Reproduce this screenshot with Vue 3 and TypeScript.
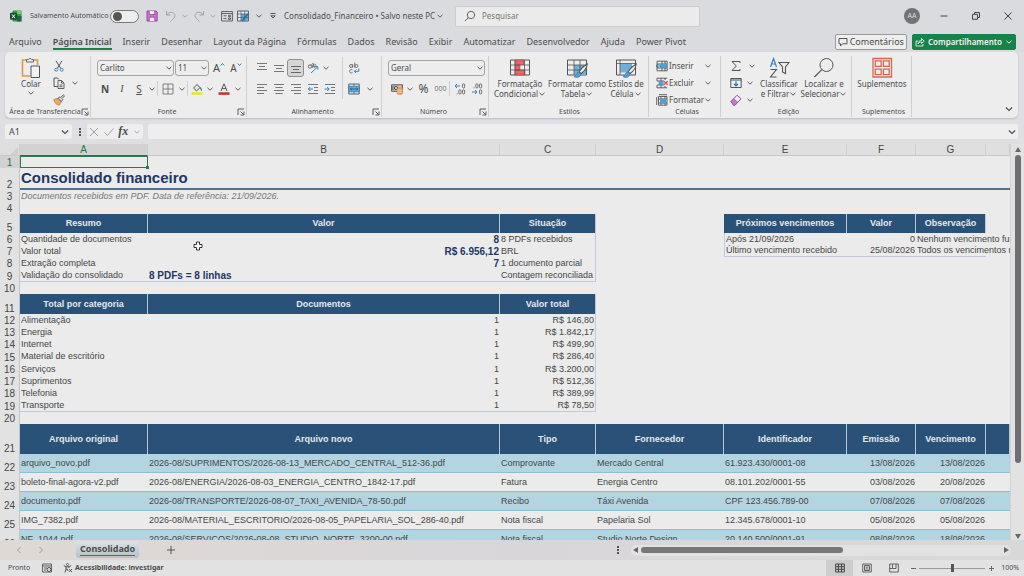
<script setup lang="ts">
import { ref } from 'vue'

interface Cell { t?: string; c?: string }
interface Row { n: number; h: string; c?: string; cells: Cell[] }

const tabs = ['Arquivo', 'Página Inicial', 'Inserir', 'Desenhar', 'Layout da Página', 'Fórmulas', 'Dados', 'Revisão', 'Exibir', 'Automatizar', 'Desenvolvedor', 'Ajuda', 'Power Pivot']
const activeTab = ref('Página Inicial')
const autosave = ref(false)
const nameBox = ref('A1')
const formula = ref('')
const query = ref('')
const zoom = ref(50)
const columns = ['A', 'B', 'C', 'D', 'E', 'F', 'G', '']

const blank = (k: number): Cell[] => Array.from({ length: k }, () => ({}))
const heads = (...t: string[]): Cell[] => t.map(x => ({ t: x, c: 'head' }))

function summary(n: number, a: string, b: string, c: string, left = false): Row {
  const last = n === 9 ? ' base' : ''
  const due: Record<number, Cell[]> = {
    6: [{ t: 'Após 21/09/2026', c: 'start' }, { t: '0', c: 'num' }, { t: 'Nenhum vencimento futuro' }, {}],
    7: [{ t: 'Último vencimento recebido', c: 'start base' }, { t: '25/08/2026', c: 'num base' }, { t: 'Todos os vencimentos recebidos', c: 'base' }, {}],
  }
  return {
    n, h: n === 9 ? 'h13' : 'h12',
    cells: [{ t: a, c: last }, { t: b, c: (left ? 'strong' : 'strong num') + last }, { t: c, c: 'end' + last }, {}, ...(due[n] ?? blank(4))],
  }
}

const categories: [string, string][] = [
  ['Alimentação', '146,80'], ['Energia', '1.842,17'], ['Internet', '499,90'], ['Material de escritório', '286,40'],
  ['Serviços', '3.200,00'], ['Suprimentos', '512,36'], ['Telefonia', '389,99'], ['Transporte', '78,50'],
]

const files: string[][] = [
  ['arquivo_novo.pdf', '2026-08/SUPRIMENTOS/2026-08-13_MERCADO_CENTRAL_512-36.pdf', 'Comprovante', 'Mercado Central', '61.923.430/0001-08', '13/08/2026', '13/08/2026'],
  ['boleto-final-agora-v2.pdf', '2026-08/ENERGIA/2026-08-03_ENERGIA_CENTRO_1842-17.pdf', 'Fatura', 'Energia Centro', '08.101.202/0001-55', '03/08/2026', '20/08/2026'],
  ['documento.pdf', '2026-08/TRANSPORTE/2026-08-07_TAXI_AVENIDA_78-50.pdf', 'Recibo', 'Táxi Avenida', 'CPF 123.456.789-00', '07/08/2026', '07/08/2026'],
  ['IMG_7382.pdf', '2026-08/MATERIAL_ESCRITORIO/2026-08-05_PAPELARIA_SOL_286-40.pdf', 'Nota fiscal', 'Papelaria Sol', '12.345.678/0001-10', '05/08/2026', '05/08/2026'],
  ['NF_1044.pdf', '2026-08/SERVICOS/2026-08-08_STUDIO_NORTE_3200-00.pdf', 'Nota fiscal', 'Studio Norte Design', '20.140.500/0001-91', '08/08/2026', '18/08/2026'],
]

const rows: Row[] = [
  { n: 1, h: 'h12', cells: [{ c: 'selected' }, ...blank(7)] },
  { n: 2, h: 'h22', c: 'title-row', cells: [{ t: 'Consolidado financeiro', c: 'title' }, ...blank(7)] },
  { n: 3, h: 'h12', cells: [{ t: 'Documentos recebidos em PDF. Data de referência: 21/09/2026.', c: 'note' }, ...blank(7)] },
  { n: 4, h: 'h12', cells: blank(8) },
  { n: 5, h: 'h19', cells: [...heads('Resumo', 'Valor', 'Situação'), {}, ...heads('Próximos vencimentos', 'Valor', 'Observação'), {}] },
  summary(6, 'Quantidade de documentos', '8', '8 PDFs recebidos'),
  summary(7, 'Valor total', 'R$ 6.956,12', 'BRL'),
  summary(8, 'Extração completa', '7', '1 documento parcial'),
  summary(9, 'Validação do consolidado', '8 PDFs = 8 linhas', 'Contagem reconciliada', true),
  { n: 10, h: 'h12', cells: blank(8) },
  { n: 11, h: 'h20', cells: [...heads('Total por categoria', 'Documentos', 'Valor total'), ...blank(5)] },
  ...categories.map(([name, value], i): Row => {
    const last = i === 7 ? ' base' : ''
    return {
      n: 12 + i, h: i % 4 === 3 ? 'h13' : 'h12',
      cells: [{ t: name, c: last }, { t: '1', c: 'num' + last }, { t: 'R$ ' + value, c: 'num end' + last }, ...blank(5)],
    }
  }),
  { n: 20, h: 'h12', cells: blank(8) },
  { n: 21, h: 'h30', cells: heads('Arquivo original', 'Arquivo novo', 'Tipo', 'Fornecedor', 'Identificador', 'Emissão', 'Vencimento', '') },
  ...files.map((f, i): Row => ({
    n: 22 + i, h: 'h19', c: i % 2 ? 'file' : 'file band',
    cells: [...f.map((t, k) => ({ t, c: k > 4 ? 'num' : '' })), {}],
  })),
]
</script>

<template>
  <div class="app">
    <svg class="sprite" aria-hidden="true">
      <symbol id="chev" viewBox="0 0 8 8"><path d="M1.500 2.800 4 5.200 6.500 2.800" fill="none" stroke="currentColor" stroke-width=".9" /></symbol>
      <symbol id="launch" viewBox="0 0 8 8"><path d="M1 7V1h6M3.500 3.500l3 3M7 3.500V7H3.500" fill="none" stroke="currentColor" stroke-width=".9" /></symbol>
      <symbol id="brush" viewBox="0 0 12 12"><path d="M11 .8C8.500 2.200 6 4.500 4.800 6.800l1.500 1.300C8.500 6.500 10.600 3.500 11 .8z" fill="#eee" stroke="#555" stroke-width=".8" /><path d="M4.500 7C2.600 7 3 9.500.8 10.500c2 1 4.800.8 5.200-2z" fill="#5b9fce" stroke="#3579a8" stroke-width=".6" /></symbol>
    </svg>

    <header class="titlebar">
      <div class="quick">
        <svg class="logo" viewBox="0 0 12 12"><rect x="2.500" y=".5" width="9" height="11" rx="1" fill="#2c9a55" /><path d="M7 .5h3.500a1 1 0 0 1 1 1V4H7z" fill="#7ccb5c" /><path d="M7 6h4.500v5.500H7z" fill="#1d6b3c" /><rect y="2.800" width="7" height="7" rx="1" fill="#164f2c" /><path d="m2 4.400 3 3.800M5 4.400 2 8.200" stroke="#fff" /></svg>
        <label class="autosave" for="autosave">Salvamento Automático</label>
        <input id="autosave" v-model="autosave" class="toggle" type="checkbox" role="switch" />
        <button class="w26" aria-label="Salvar"><svg class="i12" viewBox="0 0 12 12"><path d="M1 1h9l1.200 1.200V11H1z" fill="#c77acb" stroke="#9c45a3" /><path d="M3.200 1v3.500h5.600V1M3.200 11V7.200h5.600V11" fill="#eee" stroke="#9c45a3" stroke-width=".9" /></svg></button>
        <button class="w12 dim" aria-label="Desfazer"><svg class="i12" viewBox="0 0 12 12"><path d="M1.500 1v4h4M1.800 4.800C4 1.600 8.500 1.300 9.700 4.500c.9 2.600-1.400 4.300-4.200 7" fill="none" stroke="currentColor" /></svg></button>
        <button class="w16 dim" aria-label="Opções de desfazer"><svg class="i8"><use href="#chev" /></svg></button>
        <button class="w12 dim" aria-label="Refazer"><svg class="i12" viewBox="0 0 12 12"><path d="M10.500 1v4h-4M10.200 4.800C8 1.600 3.500 1.300 2.300 4.500c-.9 2.600 1.400 4.300 4.200 7" fill="none" stroke="currentColor" /></svg></button>
        <button class="w16 dim" aria-label="Opções de refazer"><svg class="i8"><use href="#chev" /></svg></button>
        <button class="w12" aria-label="Formulário"><svg class="i12" viewBox="0 0 12 12"><path d="M.6 1.500h10.800v9.500H.6zM.6 3.500h10.800M2.500 5.800h3M2.500 8.500h3M7.500 5.300h2v1.400h-2zM7.500 8h2v1.400h-2z" fill="none" stroke="#555" stroke-width=".9" /></svg></button>
        <button class="w20" aria-label="Tabela"><svg class="i12" viewBox="0 0 12 12"><path d="M.6 1h10.800v10H.6z" fill="#e8eef3" stroke="#4a5a68" /><path d="M4 4h7v7H4z" fill="#69a9d4" /><path d="M.6 4h10.800M.6 7.500h10.800M4 1v10M7.700 1v10" stroke="#4a5a68" stroke-width=".7" /><path d="m5 11 6-7" stroke="#1e6ea8" stroke-width="1.500" /></svg></button>
        <button class="w12" aria-label="Opções de tabela"><svg class="i8"><use href="#chev" /></svg></button>
        <button class="w16" aria-label="Personalizar"><svg class="i8" viewBox="0 0 8 8"><path d="M1.500 1.500h5M1.800 3.800 4 6l2.200-2.200z" fill="none" stroke="#444" stroke-width=".9" /></svg></button>
      </div>
      <button class="doc">Consolidado_Financeiro • Salvo neste PC <svg class="i8"><use href="#chev" /></svg></button>
      <label class="search">
        <svg class="i12" viewBox="0 0 12 12"><path d="M.8 11.200 4.500 7.500" stroke="#666" /><circle cx="7" cy="5" r="3.700" fill="none" stroke="#666" /></svg>
        <input v-model="query" type="text" placeholder="Pesquisar" aria-label="Pesquisar" />
      </label>
      <div class="window">
        <button class="avatar" aria-label="Conta AA">AA</button>
        <button class="w32" aria-label="Minimizar"><svg class="i10" viewBox="0 0 10 10"><path d="M1.500 5h7" stroke="#444" /></svg></button>
        <button class="w32" aria-label="Restaurar"><svg class="i10" viewBox="0 0 10 10"><path d="M1.500 3.300h5v5h-5zM3.500 3V1.500h5v5H7" fill="none" stroke="#444" stroke-linejoin="round" /></svg></button>
        <button class="w32" aria-label="Fechar"><svg class="i10" viewBox="0 0 10 10"><path d="m1.500 1.500 7 7M8.500 1.500l-7 7" stroke="#444" /></svg></button>
      </div>
    </header>

    <nav class="tabs" aria-label="Faixa de opções">
      <button v-for="t in tabs" :key="t" :class="['tab', { on: t === activeTab }]" @click="activeTab = t">{{ t }}</button>
      <div class="actions">
        <button class="comments"><svg class="i10" viewBox="0 0 10 10"><path d="M1 1.500h8v5.300H4.500L2.500 9V6.800H1z" fill="none" stroke="#444" stroke-width=".9" /></svg>Comentários</button>
        <button class="share"><svg class="i10" viewBox="0 0 10 10"><path d="M3 4H1v5h7V7M3 7c.2-2.500 1.500-3.500 3.500-3.500V1.500L9.300 4.200 6.500 6.500V5C5 5 4 5.500 3 7z" fill="none" stroke="#fff" stroke-width=".8" /></svg>Compartilhamento<svg class="i8"><use href="#chev" /></svg></button>
      </div>
    </nav>

    <section class="ribbon">
      <div class="group g-clip">
        <div class="body">
          <button class="big w44">
            <svg class="i22" viewBox="0 0 22 22"><path d="M7 3H2.500v16H10M13 3h4.500v5" fill="none" stroke="#e09a3c" stroke-width="1.600" /><path d="M6.500 5V2.500H8.500a1.600 1.600 0 0 1 3 0h2V5z" fill="#eee" stroke="#666" /><path d="M11 9h8.500v11.500H11z" fill="#f2f2f2" stroke="#555" /></svg>
            <span>Colar</span><svg class="i8"><use href="#chev" /></svg>
          </button>
          <div class="stack">
            <div class="line"><button class="w12" aria-label="Recortar"><svg class="i12" viewBox="0 0 12 12"><path d="M3 .8 7.800 8.500M9 .8 4.200 8.500" stroke="#555" /><circle cx="3.300" cy="9.700" r="1.500" fill="none" stroke="#3a87bd" /><circle cx="8.700" cy="9.700" r="1.500" fill="none" stroke="#3a87bd" /></svg></button></div>
            <div class="line"><button class="w12" aria-label="Copiar"><svg class="i12" viewBox="0 0 12 12"><path d="M5 9.500H1V1h3.500L6 2.500" fill="none" stroke="#555" /><path d="M5 3.500h3.500L11 6v5.500H5zM8.500 3.500V6H11M6.500 8h3M6.500 9.700h3" fill="none" stroke="#555" stroke-width=".9" /></svg></button><button class="w20" aria-label="Opções de copiar"><svg class="i8"><use href="#chev" /></svg></button></div>
            <div class="line"><button class="w12" aria-label="Pincel de formatação"><svg class="i12" viewBox="0 0 12 12"><path d="M.8 5.500 5 4.300l3.300 3.300L6.500 11C4 11.300 1.600 9 .8 5.500z" fill="#eea860" stroke="#c9792f" stroke-width=".8" /><path d="m5 4.300 2-1.500.8.700L10.300.8l1.200 1.100L9 4.700l.8.900-1.500 2z" fill="#ddd" stroke="#555" stroke-width=".9" /></svg></button></div>
          </div>
        </div>
        <div class="caption"><span>Área de Transferência</span><button aria-label="Mais opções de transferência"><svg class="i8"><use href="#launch" /></svg></button></div>
      </div>

      <div class="group g-font">
        <div class="body col">
          <div class="line tall">
            <span class="pick w77"><select aria-label="Fonte"><option>Carlito</option></select><svg class="i8"><use href="#chev" /></svg></span>
            <span class="pick w34"><select aria-label="Tamanho da fonte"><option>11</option></select><svg class="i8"><use href="#chev" /></svg></span>
            <button class="w18 glyph" aria-label="Aumentar fonte"><span>A</span><svg class="i5" viewBox="0 0 5 5"><path d="M.7 3.500 2.500 1.500l1.800 2" fill="none" stroke="#2f7fb5" /></svg></button>
            <button class="w16 glyph small" aria-label="Diminuir fonte"><span>A</span><svg class="i5" viewBox="0 0 5 5"><path d="M.7 1.500 2.500 3.500l1.800-2" fill="none" stroke="#2f7fb5" /></svg></button>
          </div>
          <div class="line tall">
            <button class="w16 fmt" aria-label="Negrito"><b>N</b></button>
            <button class="w18 fmt serif" aria-label="Itálico"><i>I</i></button>
            <button class="w16 fmt" aria-label="Sublinhado"><u>S</u></button>
            <button class="w10" aria-label="Opções de sublinhado"><svg class="i8"><use href="#chev" /></svg></button>
            <i class="sep"></i>
            <button class="w18" aria-label="Bordas"><svg class="i12" viewBox="0 0 12 12"><path d="M1 1h10v10H1zM6 1v10M1 6h10" fill="none" stroke="#777" stroke-width=".9" /></svg></button>
            <button class="w10" aria-label="Opções de bordas"><svg class="i8"><use href="#chev" /></svg></button>
            <i class="sep"></i>
            <button class="w16" aria-label="Cor de preenchimento"><svg class="i12" viewBox="0 0 12 12"><path d="M2.500 5 6 1.500 9 4.600 5.500 8z" fill="#e6e6e6" stroke="#555" /><path d="M9.300 4.500c1 1.200 1.300 2.300 1 3.200" fill="none" stroke="#2f7fb5" stroke-width="1.200" /><path d="M.5 9.300h11v2.500H.5z" fill="#e6e81e" /></svg></button>
            <button class="w10" aria-label="Opções de preenchimento"><svg class="i8"><use href="#chev" /></svg></button>
            <button class="w18" aria-label="Cor da fonte"><svg class="i12" viewBox="0 0 12 12"><path d="M3 8 6 .8 9 8M4 5.600h4" fill="none" stroke="#555" /><path d="M.5 9.300h11v2.500H.5z" fill="#d3272b" /></svg></button>
            <button class="w10" aria-label="Opções de cor da fonte"><svg class="i8"><use href="#chev" /></svg></button>
          </div>
        </div>
        <div class="caption"><span>Fonte</span><button aria-label="Mais opções de fonte"><svg class="i8"><use href="#launch" /></svg></button></div>
      </div>

      <div class="group g-align">
        <div class="body">
          <div class="col">
            <div class="line tall">
              <button class="w17" aria-label="Alinhar em cima"><svg class="i12" viewBox="0 0 12 12"><path d="M1 1.500h10M3 4.500h6M1 7.500h10" stroke="#777" /></svg></button>
              <button class="w17" aria-label="Alinhar no meio"><svg class="i12" viewBox="0 0 12 12"><path d="M1 3.500h10M3 6.500h6M1 9.500h10" stroke="#777" /></svg></button>
              <button class="w17 active" aria-label="Alinhar embaixo" aria-pressed="true"><svg class="i12" viewBox="0 0 12 12"><path d="M1 4.500h10M3 7.500h6M1 10.500h10" stroke="#666" /></svg></button>
              <button class="w17" aria-label="Orientação"><svg class="i12" viewBox="0 0 12 12"><circle cx="3" cy="4.500" r="1.700" fill="none" stroke="#666" /><path d="M4.500 2.500 6 6M5.500 1l2.300 4.500" stroke="#666" /><circle cx="7.400" cy="3.500" r="1.400" fill="none" stroke="#666" stroke-width=".8" /><path d="m4 11 6.500-6M7.800 4.700h3v3" fill="none" stroke="#2f86c0" /></svg></button>
              <button class="w10" aria-label="Opções de orientação"><svg class="i8"><use href="#chev" /></svg></button>
            </div>
            <div class="line tall">
              <button class="w17" aria-label="Alinhar à esquerda"><svg class="i12" viewBox="0 0 12 12"><path d="M1 1.500h10M1 4.500h7M1 7.500h10M1 10.500h7" stroke="#777" /></svg></button>
              <button class="w17" aria-label="Centralizar"><svg class="i12" viewBox="0 0 12 12"><path d="M1 1.500h10M2.500 4.500h7M1 7.500h10M2.500 10.500h7" stroke="#777" /></svg></button>
              <button class="w17" aria-label="Alinhar à direita"><svg class="i12" viewBox="0 0 12 12"><path d="M1 1.500h10M4 4.500h7M1 7.500h10M4 10.500h7" stroke="#777" /></svg></button>
              <button class="w17" aria-label="Diminuir recuo"><svg class="i12" viewBox="0 0 12 12"><path d="M1 1.500h10M7 4.500h4M7 7.500h4M1 10.500h10" stroke="#777" /><path d="M6 6H1.300m2-2-2 2 2 2" fill="none" stroke="#2f86c0" /></svg></button>
              <button class="w17" aria-label="Aumentar recuo"><svg class="i12" viewBox="0 0 12 12"><path d="M1 1.500h10M7 4.500h4M7 7.500h4M1 10.500h10" stroke="#777" /><path d="M.5 6h4.700m-2-2 2 2-2 2" fill="none" stroke="#2f86c0" /></svg></button>
            </div>
          </div>
          <i class="sep long"></i>
          <div class="col">
            <div class="line tall"><button class="w22" aria-label="Quebrar texto"><svg class="i12" viewBox="0 0 12 12"><circle cx="3" cy="4" r="1.500" fill="none" stroke="#666" stroke-width=".9" /><path d="M4.700 2.200v3.500M6.800.5v5.200M4.600 8C2.500 7 1.500 8.300 1.500 9.300s1.200 2.200 3.100 1.400" fill="none" stroke="#666" stroke-width=".9" /><circle cx="8.400" cy="4" r="1.500" fill="none" stroke="#666" stroke-width=".9" /><path d="M10.800 6.500v2.800H6.500m1.700-1.800L6.400 9.300l1.800 1.800" fill="none" stroke="#2f86c0" /></svg></button></div>
            <div class="line tall"><button class="w22" aria-label="Mesclar"><svg class="i12" viewBox="0 0 12 12"><path d="M.8 1h10.400v10H.8z" fill="#d7e6f0" stroke="#4f6472" /><path d="M.8 3.300h10.400v5.400H.8z" fill="#6bb0dc" stroke="#3b6f92" stroke-width=".7" /><path d="M6 1v2.300M6 8.700V11" stroke="#4f6472" stroke-width=".8" /><path d="M2.300 6h7.400M3.800 4.500 2.300 6l1.500 1.500M8.200 4.500 9.700 6 8.200 7.500" fill="none" stroke="#175a86" stroke-width=".9" /></svg></button><button class="w10" aria-label="Opções de mesclar"><svg class="i8"><use href="#chev" /></svg></button></div>
          </div>
        </div>
        <div class="caption"><span>Alinhamento</span><button aria-label="Mais opções de alinhamento"><svg class="i8"><use href="#launch" /></svg></button></div>
      </div>

      <div class="group g-num">
        <div class="body col">
          <div class="line tall"><span class="pick full"><select aria-label="Formato de número"><option>Geral</option></select><svg class="i8"><use href="#chev" /></svg></span></div>
          <div class="line tall">
            <button class="w17" aria-label="Formato de moeda"><svg class="i12" viewBox="0 0 12 12"><path d="M.6 1.800h10.800v6.500H.6z" fill="#c9c9c9" stroke="#555" /><circle cx="5" cy="5" r="1.700" fill="none" stroke="#555" /><path d="M2 3v4" stroke="#555" /><rect x="6" y="4.800" width="5.500" height="6.500" rx="1.500" fill="#eca060" stroke="#cd7f3a" stroke-width=".7" /><path d="M6.200 7.200h5M6.200 9.200h5" stroke="#fff" stroke-width=".5" /></svg></button>
            <button class="w10" aria-label="Opções de moeda"><svg class="i8"><use href="#chev" /></svg></button>
            <button class="w17 pct" aria-label="Porcentagem">%</button>
            <button class="w17 zeros" aria-label="Milhares">000</button>
            <i class="sep"></i>
            <button class="w17" aria-label="Aumentar casas decimais"><svg class="i12" viewBox="0 0 12 12"><path d="M6 3H1m2-2L1 3l2 2" fill="none" stroke="#2f86c0" /><g fill="none" stroke="#666" stroke-width=".9"><rect x="8.500" y=".8" width="2.200" height="4.200" rx="1.100" /><rect x="4.800" y="6.800" width="2.200" height="4.200" rx="1.100" /><rect x="8.500" y="6.800" width="2.200" height="4.200" rx="1.100" /><path d="M3 10.300v1" /></g></svg></button>
            <button class="w17" aria-label="Diminuir casas decimais"><svg class="i12" viewBox="0 0 12 12"><path d="M1 9h5M4 7l2 2-2 2" fill="none" stroke="#2f86c0" /><g fill="none" stroke="#666" stroke-width=".9"><rect x="4.800" y=".8" width="2.200" height="4.200" rx="1.100" /><rect x="8.500" y=".8" width="2.200" height="4.200" rx="1.100" /><rect x="8.500" y="6.800" width="2.200" height="4.200" rx="1.100" /><path d="M3 4.300v1" /></g></svg></button>
          </div>
        </div>
        <div class="caption"><span>Número</span><button aria-label="Mais opções de número"><svg class="i8"><use href="#launch" /></svg></button></div>
      </div>

      <div class="group g-style">
        <div class="body">
          <button class="big w56"><svg class="i22" viewBox="0 0 22 22"><path d="M1.500 3h19v15h-19z" fill="#eee" stroke="#555" /><path d="M6 3h9v4.500H6zM6 8h5v5H6zM6 13h10v5H6z" fill="#e8636a" stroke="#c1373f" stroke-width=".6" /><path d="M1.500 8h19M1.500 13h19M6 3v15M15.500 3v15" stroke="#555" stroke-width=".8" /></svg><span>Formatação</span><span>Condicional <svg class="i8"><use href="#chev" /></svg></span></button>
          <button class="big w58"><svg class="i22" viewBox="0 0 22 22"><path d="M1.500 3h19v15h-19z" fill="#eee" stroke="#555" /><path d="M8 8h12v10H8z" fill="#6db0dd" /><path d="M1.500 8h19M1.500 13h19M8 3v15M14 3v15" stroke="#555" stroke-width=".8" /><g transform="translate(7 6) scale(1.300)"><use href="#brush" width="12" height="12" /></g></svg><span>Formatar como</span><span>Tabela <svg class="i8"><use href="#chev" /></svg></span></button>
          <button class="big w40"><svg class="i22" viewBox="0 0 22 22"><path d="M1.500 3h19v15h-19z" fill="#eee" stroke="#555" /><path d="M5 6.500h12v9H5z" fill="#6db0dd" /><path d="M1.500 6.500h19M5 3v15" stroke="#555" stroke-width=".8" /><g transform="translate(7 6) scale(1.300)"><use href="#brush" width="12" height="12" /></g></svg><span>Estilos de</span><span>Célula <svg class="i8"><use href="#chev" /></svg></span></button>
        </div>
        <div class="caption"><span>Estilos</span></div>
      </div>

      <div class="group g-cell">
        <div class="body stack">
          <button class="item"><svg class="i12" viewBox="0 0 12 12"><path d="M1 1.200h10.200v9.600H1zM1 4h10M1 8h10M6 1v10M9 1v10" fill="none" stroke="#555" stroke-width=".9" /><path d="M4 4h7v4H4z" fill="#4f9fd3" /><path d="M5 6H.3m2-2-2 2 2 2" fill="none" stroke="#2476ac" /></svg><span>Inserir</span><svg class="i8"><use href="#chev" /></svg></button>
          <button class="item"><svg class="i12" viewBox="0 0 12 12"><path d="M1 1.200h10.200M1 10.800h10.200M1 1v3M1 8v3M1 4h7M1 8h7M5 1v10M9 1v2M9 9v2" fill="none" stroke="#555" stroke-width=".9" /><path d="M2.500 4h5v4h-5z" fill="#4f9fd3" /><path d="m8 4.200 3.600 3.600m0-3.600L8 7.800" stroke="#d24a4f" stroke-width="1.200" /></svg><span>Excluir</span><svg class="i8"><use href="#chev" /></svg></button>
          <button class="item"><svg class="i12" viewBox="0 0 12 12"><path d="M2.500 2.500H11v8.700H2.500zM2.500 5H11M2.500 9H11M5 2.500v8.700M9 2.500v8.700M.7 3v8M3 .7h8" fill="none" stroke="#555" stroke-width=".9" /><path d="M4 4.500h6v5H4z" fill="#4f9fd3" /></svg><span>Formatar</span><svg class="i8"><use href="#chev" /></svg></button>
        </div>
        <div class="caption"><span>Células</span></div>
      </div>

      <div class="group g-edit">
        <div class="body">
          <div class="stack">
            <div class="line"><button class="w18" aria-label="AutoSoma"><svg class="i12" viewBox="0 0 12 12"><path d="M10 3V1.500H2L6.300 6 2 10.500h8V9" fill="none" stroke="#555" /></svg></button><button class="w14" aria-label="Opções de soma"><svg class="i8"><use href="#chev" /></svg></button></div>
            <div class="line"><button class="w18" aria-label="Preencher"><svg class="i12" viewBox="0 0 12 12"><path d="M.8 1.500h10.400v9H.8z" fill="#e9f1f6" stroke="#555" /><path d="M.8 3h10.400" stroke="#555" /><path d="M6 4.300v4.500M4 7l2 2 2-2" fill="none" stroke="#2476ac" stroke-width="1.200" /></svg></button><button class="w10" aria-label="Opções de preencher"><svg class="i8"><use href="#chev" /></svg></button></div>
            <div class="line"><button class="w18" aria-label="Limpar"><svg class="i12" viewBox="0 0 12 12"><path d="m1 7.500 6-6.300 4 3.600-6 6.400H3.500z" fill="#eee" stroke="#a24cab" /><path d="m1 7.500 2.700-2.800 4 3.600L5 11.200H3.500z" fill="#c27ac9" stroke="#a24cab" stroke-width=".7" /></svg></button><button class="w10" aria-label="Opções de limpar"><svg class="i8"><use href="#chev" /></svg></button></div>
          </div>
          <button class="big w40"><svg class="i22" viewBox="0 0 22 22"><path d="M2.500 10 5.500 1.500 8.500 10M3.500 7h4" fill="none" stroke="#2f86c0" stroke-width="1.200" /><path d="M2.500 12.500h6L2.500 20h6M11 5.500h10L17.500 10v6.500l-3-1.500v-5z" fill="none" stroke="#555" stroke-width="1.100" /></svg><span>Classificar</span><span>e Filtrar <svg class="i8"><use href="#chev" /></svg></span></button>
          <button class="big w50"><svg class="i22" viewBox="0 0 22 22"><circle cx="13.500" cy="8" r="6.500" fill="none" stroke="#555" /><path d="m1.500 20 7.300-7.300" stroke="#555" stroke-width="1.200" /></svg><span>Localizar e</span><span>Selecionar <svg class="i8"><use href="#chev" /></svg></span></button>
        </div>
        <div class="caption"><span>Edição</span></div>
      </div>

      <div class="group g-add">
        <div class="body"><button class="big w50"><svg class="i22" viewBox="0 0 22 22"><path d="M2 1.500h18.500V20H2zM4.300 3.800h5.900v5.500H4.300zM12.400 3.800h5.800v5.500h-5.800zM4.300 12.200h5.900v5.500H4.300zM12.400 12.200h5.800v5.500h-5.800z" fill="none" stroke="#d2694e" stroke-width="1.300" /></svg><span>Suplementos</span></button></div>
        <div class="caption"><span>Suplementos</span></div>
      </div>
      <button class="collapse" aria-label="Recolher faixa"><svg class="i10"><use href="#chev" /></svg></button>
    </section>

    <section class="formula">
      <div class="namebox"><input v-model="nameBox" type="text" aria-label="Caixa de nome" /><button aria-label="Nomes"><svg class="i10"><use href="#chev" /></svg></button></div>
      <svg class="dots" viewBox="0 0 4 10"><path d="M1 1h2v2H1zM1 4h2v2H1zM1 7h2v2H1z" fill="#555" /></svg>
      <div class="fxbox">
        <button class="dim" aria-label="Cancelar"><svg class="i10" viewBox="0 0 10 10"><path d="m1 1 8 8M9 1 1 9" stroke="currentColor" /></svg></button>
        <button class="dim" aria-label="Confirmar"><svg class="i10" viewBox="0 0 10 10"><path d="m.5 5.500 3 3 6-7" fill="none" stroke="currentColor" /></svg></button>
        <button class="fx" aria-label="Inserir função">fx</button>
        <button class="dim" aria-label="Opções de função"><svg class="i8"><use href="#chev" /></svg></button>
      </div>
      <div class="entry"><input v-model="formula" type="text" aria-label="Barra de fórmulas" /><button aria-label="Expandir barra"><svg class="i10"><use href="#chev" /></svg></button></div>
    </section>

    <main class="work">
      <div class="sheet">
        <table>
          <colgroup><col class="c0" /><col class="ca" /><col class="cb" /><col class="cc" /><col class="ca" /><col class="ce" /><col class="cf" /><col class="cg" /><col /></colgroup>
          <thead><tr><th class="corner" aria-label="Selecionar tudo"><svg viewBox="0 0 8 8"><path d="M8 0v8H0z" fill="#cfcfcf" /></svg></th><th v-for="(c, i) in columns" :key="i" :class="{ cur: i === 0 }" scope="col">{{ c }}</th></tr></thead>
          <tbody>
            <tr v-for="r in rows" :key="r.n" :class="[r.h, r.c]">
              <th scope="row" :class="{ cur: r.n === 1 }">{{ r.n }}</th>
              <td v-for="(c, i) in r.cells" :key="i" :class="c.c">{{ c.t }}</td>
            </tr>
          </tbody>
        </table>
        <svg class="cursor" viewBox="0 0 10 10"><path d="M3.500 1h3v2.500H9v3H6.500V9h-3V6.500H1v-3h2.500z" fill="#fff" stroke="#333" /></svg>
      </div>
      <div class="vscroll"><button aria-label="Rolar para cima"><svg viewBox="0 0 6 5"><path d="M3 0 6 5H0z" fill="#666" /></svg></button><div class="vtrack"><span class="vthumb"></span></div><button aria-label="Rolar para baixo"><svg viewBox="0 0 6 5"><path d="M0 0h6L3 5z" fill="#666" /></svg></button></div>
    </main>

    <footer class="sheets">
      <button class="nav" aria-label="Planilha anterior"><svg class="i8" viewBox="0 0 8 8"><path d="M5.500 1 2.500 4l3 3" fill="none" stroke="#999" /></svg></button>
      <button class="nav" aria-label="Próxima planilha"><svg class="i8" viewBox="0 0 8 8"><path d="m2.500 1 3 3-3 3" fill="none" stroke="#999" /></svg></button>
      <button class="sheet-tab"><span>Consolidado</span></button>
      <button class="add" aria-label="Nova planilha"><svg class="i10" viewBox="0 0 10 10"><path d="M5 1v8M1 5h8" stroke="#555" /></svg></button>
      <div class="hwrap">
        <svg class="dots" viewBox="0 0 4 10"><path d="M1 1h2v2H1zM1 4h2v2H1zM1 7h2v2H1z" fill="#555" /></svg>
        <div class="hscroll"><button aria-label="Rolar para a esquerda"><svg viewBox="0 0 5 6"><path d="M5 0v6L0 3z" fill="#666" /></svg></button><div class="htrack"><span class="hthumb"></span></div><button aria-label="Rolar para a direita"><svg viewBox="0 0 5 6"><path d="m0 0 5 3-5 3z" fill="#666" /></svg></button></div>
      </div>
    </footer>

    <footer class="status">
      <span class="ready">Pronto</span>
      <button class="w22" aria-label="Gravar macro"><svg class="i10" viewBox="0 0 10 10"><path d="M.5 1h9v8h-9zM.5 3h9M2 5h3M2 7h2" fill="none" stroke="#555" stroke-width=".9" /><circle cx="7" cy="6.500" r="2" fill="#ddd" stroke="#444" stroke-width=".9" /></svg></button>
      <button class="access"><svg class="i10" viewBox="0 0 10 10"><circle cx="4.500" cy="1.500" r="1" fill="none" stroke="#444" stroke-width=".8" /><path d="M.8 2.500 3 3.800V6L2 9.500M8.200 2.500 6 3.800V5M3 3.800h3M3 6l1.500.3L5 8M6 6l3 3M9 6 6 9" fill="none" stroke="#444" stroke-width=".9" /></svg>Acessibilidade: investigar</button>
      <div class="views">
        <button class="w27 on" aria-label="Normal"><svg class="i10" viewBox="0 0 10 10"><path d="M.7 1h8.600v8H.7zM.7 3.700h8.600M.7 6.300h8.600M3.500 1v8M6.500 1v8" fill="none" stroke="#444" /></svg></button>
        <button class="w27" aria-label="Layout da página"><svg class="i10" viewBox="0 0 10 10"><path d="M.7 1h8.600v8H.7zM2.500 2.500h5v5h-5zM3.500 4.200h3M3.500 6h3" fill="none" stroke="#555" stroke-width=".9" /></svg></button>
        <button class="w27" aria-label="Quebra de página"><svg class="i10" viewBox="0 0 10 10"><path d="M.7 1h8.600v8H.7zM3.500 1v4.500H.7M3.500 5.500H7V1" fill="none" stroke="#555" stroke-width=".9" /></svg></button>
        <button class="w12" aria-label="Reduzir"><svg class="i5" viewBox="0 0 5 5"><path d="M0 2.500h5" stroke="#666" /></svg></button>
        <input v-model="zoom" type="range" min="0" max="100" aria-label="Zoom" />
        <button class="w12" aria-label="Ampliar"><svg class="i5" viewBox="0 0 5 5"><path d="M0 2.500h5M2.500 0v5" stroke="#666" /></svg></button>
        <span class="pctv">100%</span>
      </div>
    </footer>
  </div>
</template>

<style>
body { margin: 0; }
</style>

<style scoped>
.app { height: 100vh; display: flex; flex-direction: column; overflow: hidden; background: #dfdfe3; color: #4c4c4c; font-family: "Noto Sans", "Open Sans", sans-serif; font-size: 8px; line-height: 10px; }
.app * { box-sizing: border-box; }
button { border: 0; padding: 0; margin: 0; background: none; color: inherit; font: inherit; display: flex; align-items: center; justify-content: center; flex: none; white-space: nowrap; }
input, select { font: inherit; color: inherit; border: 0; padding: 0; margin: 0; background: none; outline: 0; min-width: 0; }
svg { flex: none; display: block; }
.sprite { position: absolute; width: 0; height: 0; }
.i5 { width: 5px; height: 5px; }
.i8 { width: 8px; height: 8px; }
.i10 { width: 10px; height: 10px; }
.i12 { width: 12px; height: 12px; }
.i22 { width: 22px; height: 22px; }
.w10 { width: 10px; } .w12 { width: 12px; } .w14 { width: 14px; } .w16 { width: 16px; } .w17 { width: 17px; } .w18 { width: 18px; }
.w20 { width: 20px; } .w22 { width: 22px; } .w26 { width: 26px; } .w27 { width: 27px; } .w32 { width: 32px; } .w34 { width: 34px; }
.w40 { width: 40px; } .w44 { width: 44px; } .w50 { width: 50px; } .w56 { width: 56px; } .w58 { width: 58px; } .w77 { width: 77px; }
.dim { color: #a2a2a6; }

.titlebar { height: 32px; flex: none; display: flex; align-items: center; background: #dadbdf; }
.quick { width: 284px; flex: none; display: flex; align-items: center; padding-left: 10px; }
.logo { width: 12px; height: 12px; margin-right: 8px; }
.autosave { width: 80px; font-size: 7px; white-space: nowrap; }
.toggle { appearance: none; width: 29px; height: 13px; border: 1px solid #777; border-radius: 7px; background: #eee; display: flex; align-items: center; padding-left: 2px; }
.toggle::before { content: ""; width: 9px; height: 9px; border-radius: 50%; background: #555; }
.toggle:checked { padding-left: 16px; }
.doc { width: 171px; justify-content: flex-start; gap: 1px; }
.search { flex: 0 1 245px; height: 21px; display: flex; align-items: center; gap: 6px; padding-left: 8px; background: #ebebeb; border: 1px solid #cdced2; border-radius: 2px; }
.search input { flex: 1; }
.search input::placeholder { color: #777; opacity: 1; }
.window { margin-left: auto; display: flex; align-items: center; }
.avatar { width: 16px; height: 16px; border-radius: 50%; background: #737375; color: #dcdcdc; font-size: 7px; margin-right: 8px; }

.tabs { height: 20px; flex: none; display: flex; align-items: center; background: #dadbdf; padding: 0 8px 0 9px; gap: 11px; font-size: 9px; }
.tab { height: 16px; padding-top: 2px; border-bottom: 2px solid transparent; }
.tab.on { font-weight: 600; border-color: #1f7d4b; }
.actions { margin-left: auto; display: flex; gap: 5px; }
.comments, .share { height: 16px; border: 1px solid #9b9b9b; border-radius: 2px; background: #eee; gap: 2px; padding: 0 2px; }
.share { background: #17834a; border-color: #17834a; color: #eef5f0; font-size: 8px; font-weight: 600; gap: 3px; }

.ribbon { height: 66px; flex: none; margin: 0 6px 0 5px; display: flex; background: #ededee; border-radius: 5px; box-shadow: 0 1px 2px #b9bac0; }
.group { height: 61px; margin-top: 4px; border-right: 1px solid #cfcfcf; flex: none; display: flex; flex-direction: column; padding-left: 6px; }
.g-clip { width: 86px; padding-left: 4px; } .g-font { width: 156px; } .g-align { width: 135px; } .g-num { width: 107px; } .g-style { width: 160px; padding-left: 3px; } .g-cell { width: 72px; } .g-edit { width: 131px; } .g-add { width: 60px; padding-left: 5px; }
.body { flex: 1; display: flex; min-height: 0; padding-top: 1px; }
.col, .stack { display: flex; flex-direction: column; }
.line { height: 17px; display: flex; align-items: center; flex: none; }
.line.tall { height: 21px; }
.sep { width: 1px; height: 15px; background: #cfcfcf; margin-right: 1px; flex: none; }
.sep.long { height: 42px; margin: 0 0 0 4px; }
.caption { height: 10px; flex: none; display: flex; align-items: center; font-size: 7px; padding-right: 1px; }
.caption span { flex: 1; text-align: center; white-space: nowrap; }
.caption button { width: 8px; height: 10px; }
.big { flex-direction: column; justify-content: flex-start; }
.big span { display: flex; align-items: center; line-height: 10px; }
.pick { position: relative; height: 16px; margin-right: 1px; display: block; }
.pick select { width: 100%; height: 16px; appearance: none; border: 1px solid #a5a5a5; border-radius: 3px; padding-left: 2px; }
.pick svg { position: absolute; right: 1px; top: 4px; pointer-events: none; }
.pick.full { width: 97px; }
.glyph { font-size: 11px; align-items: flex-start; line-height: 12px; }
.glyph.small { font-size: 10px; }
.fmt { font-size: 10px; }
.serif { font-family: "Liberation Serif", serif; }
.active { height: 18px; background: #d6d6d6; border: 1px solid #8f8f8f; border-radius: 3px; }
.pct { font-size: 12px; }
.zeros { font-size: 7px; color: #777; }
.item { height: 17px; justify-content: flex-start; gap: 1px; margin-left: 1px; }
.item span { width: 34px; text-align: left; }
.collapse { margin: auto 4px 4px auto; }

.formula { height: 15px; flex: none; margin: 6px 6px 5px 5px; display: flex; align-items: stretch; }
.namebox, .fxbox, .entry { background: #eeeeee; border-radius: 2px; display: flex; align-items: center; padding: 0 2px; }
.namebox { width: 67px; font-size: 9px; }
.namebox input, .entry input { flex: 1; width: 0; padding-left: 2px; }
.dots { width: 4px; height: 10px; align-self: center; margin: 0 5px 0 6px; }
.fxbox { width: 56px; justify-content: space-between; margin-right: 5px; }
.fx { font: italic 700 12px "Liberation Serif", serif; }
.entry { flex: 1; padding-right: 1px; }

.work { flex: 1; min-height: 0; display: flex; background: #ebebeb; }
.sheet { flex: 1; min-width: 0; overflow: hidden; position: relative; }
table { width: 100%; table-layout: fixed; border-collapse: separate; border-spacing: 0; font-family: "Liberation Sans", Arial, sans-serif; font-size: 9px; line-height: 11px; color: #464646; }
.c0 { width: 20px; } .ca { width: 128px; } .cb { width: 352px; } .cc { width: 96px; } .ce { width: 123px; } .cf { width: 69px; } .cg { width: 70px; }
thead th { height: 12px; font-size: 10px; font-weight: 400; padding: 0; background: #dfdfdf; border-right: 1px solid #cecece; border-bottom: 1px solid #c8c8c8; }
thead th.cur { background: #d2d2d2; color: #24764a; border-bottom-color: #24764a; }
thead .corner svg { width: 8px; height: 8px; margin: 2px 1px 0 auto; }
tbody th { background: #e2e2e2; border-right: 1px solid #c4c4c4; font-size: 10px; font-weight: 400; padding: 0; vertical-align: bottom; line-height: 11px; }
tbody th.cur { background: #d2d2d2; color: #24764a; }
td { padding: 0 1px; white-space: nowrap; vertical-align: middle; }
.h12 { height: 12px; } .h13 { height: 13px; } .h19 { height: 19px; } .h20 { height: 20px; } .h22 { height: 22px; } .h30 { height: 30px; }
.title-row td { border-bottom: 2px solid #4f7395; }
.title { font-size: 15px; line-height: 18px; font-weight: 700; color: #1f3864; }
.note { font-style: italic; color: #777; }
.num { text-align: right; }
.strong { font-size: 10px; font-weight: 700; color: #1f3864; }
.head { background: #2a5278; color: #e4e9ee; font-weight: 700; text-align: center; border-right: 1px solid #b9c8d5; }
.start { border-left: 1px solid #c3c8dc; }
.end { border-right: 1px solid #c3c8dc; }
.base { border-bottom: 1px solid #c3c8dc; }
.file td { border-bottom: 1px solid #8dbfd3; }
.band td { background: #b3d5e2; }
.selected { position: relative; outline: 1px solid #2c7a50; outline-offset: -1px; }
.selected::after { content: ""; position: absolute; right: -1px; bottom: -1px; width: 3px; height: 3px; background: #2c7a50; }
.cursor { position: absolute; left: 193px; top: 97px; width: 10px; height: 10px; }
.vscroll { width: 14px; flex: none; display: flex; flex-direction: column; align-items: center; padding: 3px 0 1px; background: #e2e2e2; border-left: 1px solid #d2d2d2; }
.vscroll button, .vscroll svg { width: 6px; height: 5px; }
.vtrack { flex: 1; padding: 3px 0; }
.vthumb { display: block; width: 6px; height: 82%; border-radius: 3px; background: #6f6f72; }

.sheets { height: 20px; flex: none; display: flex; align-items: center; background: linear-gradient(90deg, #ded9d4, #d9d6da 50%, #d8d8d8); padding: 0 13px 0 8px; }
.nav { width: 22px; }
.sheet-tab { height: 17px; margin: 0 27px 2px 24px; padding: 0 4px; border-radius: 3px; background: linear-gradient(#dde2e6, #b4c1c6); font-size: 9px; font-weight: 700; }
.sheet-tab span { border-bottom: 1px solid #2c8358; line-height: 13px; }
.hwrap { margin-left: auto; width: 40%; display: flex; align-items: center; }
.hscroll { flex: 1; height: 11px; display: flex; align-items: center; gap: 3px; padding: 0 2px; margin-left: 6px; background: #e2e2e2; border-radius: 5px; }
.hscroll button, .hscroll svg { width: 5px; height: 6px; }
.htrack { flex: 1; }
.hthumb { display: block; width: 56%; height: 6px; border-radius: 3px; background: #777; }

.status { height: 16px; flex: none; display: flex; align-items: center; background: #e2e2e2; padding-left: 8px; font-size: 7px; }
.ready { width: 28px; }
.access { font-weight: 700; gap: 2px; margin-left: 5px; }
.views { margin-left: auto; display: flex; align-items: center; align-self: stretch; padding-right: 5px; }
.views .on { align-self: stretch; background: #cdcdcd; }
.views input { appearance: none; width: 66px; height: 10px; background: linear-gradient(#999, #999) center / 100% 1px no-repeat; }
.views input::-webkit-slider-thumb { appearance: none; width: 3px; height: 8px; background: #555; }
.pctv { width: 22px; text-align: right; }
</style>
